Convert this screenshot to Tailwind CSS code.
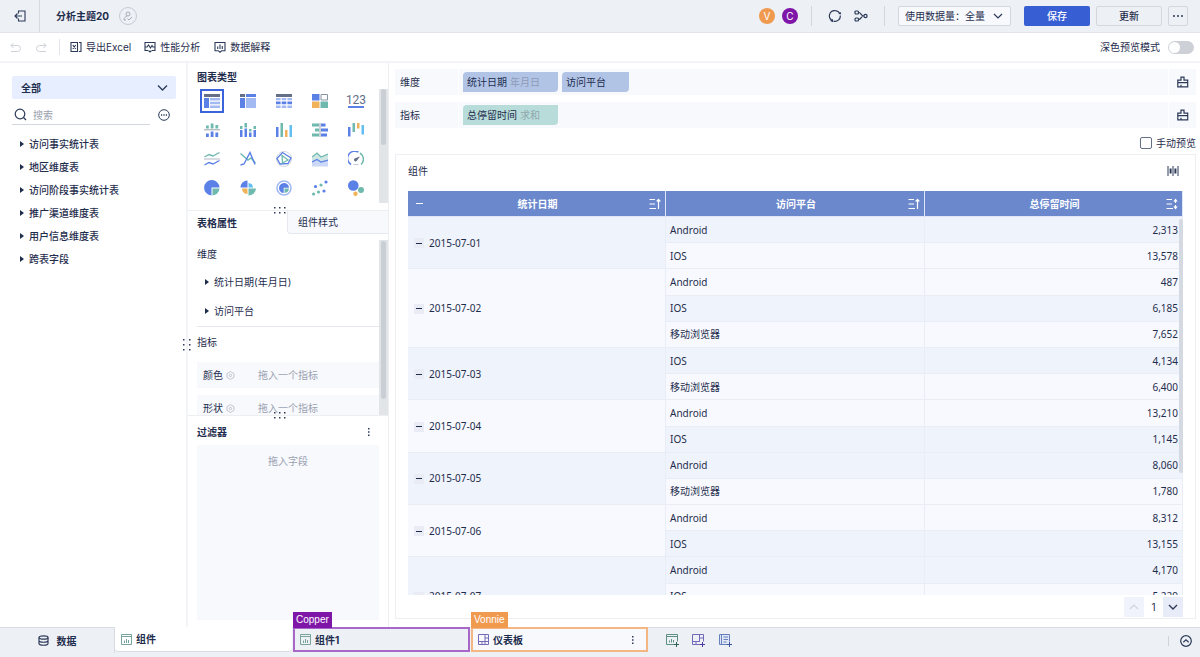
<!DOCTYPE html>
<html lang="zh-CN">
<head>
    <meta charset="UTF-8">
    <meta name="viewport" content="width=device-width, initial-scale=1.0">
    <title>分析主题20</title>
    <script src="https://cdn.jsdelivr.net/npm/@tailwindcss/browser@4"></script>
</head>
<body class="flex flex-col h-screen overflow-hidden bg-white text-[10px] leading-4 text-[#1f2d4d] font-['Inter','Noto_Sans_CJK_SC',sans-serif]">

    <!-- Header -->
    <header class="flex items-center h-[33px] shrink-0 bg-[#edf0f5] border-b border-[#e1e4e9]">
        <button aria-label="退出" class="flex items-center justify-center w-10 h-full border-r border-[#d5d9e0]">
            <svg class="size-3" viewBox="0 0 12 12" fill="none" stroke="#2c3a58" stroke-width="1.1"><path d="M4.500 3.500V1H11V11H4.500V8.500M8 6H1M3.500 3.500L1 6L3.500 8.500"/></svg>
        </button>
        <h1 class="ml-4 font-bold">分析主题20</h1>
        <button aria-label="编辑者" class="flex items-center justify-center ml-[10px] size-[18px] rounded-full border border-[#c6cad3]">
            <svg class="size-[10px]" viewBox="0 0 10 10" fill="none" stroke="#a5abb9"><circle cx="5" cy="3" r="2"/><path d="M4 5C2 6 1 7 1 9H3M4.500 7.500L6 9L9 6"/></svg>
        </button>
        <div class="flex items-center ml-auto pr-3">
            <span class="flex items-center justify-center size-4 rounded-full bg-[#f09a4f] text-white">V</span>
            <span class="flex items-center justify-center ml-[7px] size-4 rounded-full bg-[#7e17a8] text-white">C</span>
            <span class="ml-[13px] w-px h-5 bg-[#d3d7de]"></span>
            <button aria-label="刷新" class="ml-4"><svg class="size-[14px]" viewBox="0 0 14 14" fill="none" stroke="#2c3a58" stroke-width="1.200"><path d="M4 11.500A5.300 5.300 0 0 1 7.500 1.700A5.300 5.300 0 0 1 11.800 4.500M12.300 6.500A5.300 5.300 0 0 1 5.500 12.100"/><path fill="#2c3a58" stroke="none" d="M2 11.800L5 10V13.200ZM13.300 5.300L10.300 5L12.300 2.800Z"/></svg></button>
            <button aria-label="血缘" class="ml-3"><svg class="size-[14px]" viewBox="0 0 14 14" fill="none" stroke="#2c3a58" stroke-width="1.200"><rect x="1" y="2" width="3.500" height="3" rx="1"/><rect x="1" y="9" width="3.500" height="3" rx="1"/><circle cx="11.500" cy="7" r="1.600"/><path d="M4.500 3.500C7.500 3.500 6.500 7 9.800 7M4.500 10.500C7.500 10.500 6.500 7 9.800 7"/></svg></button>
            <span class="ml-4 w-px h-5 bg-[#d3d7de]"></span>
            <div class="relative ml-[13px]">
                <select aria-label="使用数据量" class="appearance-none block w-[113px] h-5 pl-[6px] border border-[#d3d7de] rounded-xs bg-[#f7f9fd]"><option>使用数据量：全量</option></select>
                <svg class="absolute right-2 top-[5px] size-[10px] pointer-events-none" viewBox="0 0 10 10" fill="none" stroke="#2c3a58" stroke-width="1.200"><path d="M1 3L5 7L9 3"/></svg>
            </div>
            <button class="ml-[13px] w-[66px] h-5 rounded-xs bg-[#385ed4] text-white font-medium">保存</button>
            <button class="ml-[6px] w-[66px] h-5 rounded-xs border border-[#d3d7de] font-medium">更新</button>
            <button aria-label="更多" class="flex items-center justify-center ml-[6px] size-5 rounded-xs border border-[#d3d7de]">
                <svg class="w-[10px] h-[2px]" viewBox="0 0 10 2" fill="#2c3a58"><circle cx="1" cy="1" r="1"/><circle cx="5" cy="1" r="1"/><circle cx="9" cy="1" r="1"/></svg>
            </button>
        </div>
    </header>

    <!-- Toolbar -->
    <div class="flex items-center h-[30px] shrink-0 px-[10px] pr-[6px] border-b-2 border-[#f3f4f7]">
        <button aria-label="撤销"><svg class="size-[11px]" viewBox="0 0 11 11" fill="none" stroke="#cdd1d8"><path d="M3.500 1L1 3.500L3.500 6M1 3.500H7.500A2.800 2.800 0 0 1 7.500 9.500H1"/></svg></button>
        <button aria-label="重做" class="ml-[15px]"><svg class="size-[11px]" viewBox="0 0 11 11" fill="none" stroke="#cdd1d8"><path d="M7.500 1L10 3.500L7.500 6M10 3.500H3.500A2.800 2.800 0 0 0 3.500 9.500H10"/></svg></button>
        <span class="ml-3 w-px h-4 bg-[#e1e4e9]"></span>
        <button class="flex items-center gap-1 ml-[10px]">
            <svg class="size-3" viewBox="0 0 12 12" fill="none" stroke="#2c3a58" stroke-width="1.100"><path d="M7.500 1.500H1V10.500H7.500ZM9 1.500H11V10.500H9M2.800 4L5.700 8M5.700 4L2.800 8"/></svg>导出Excel
        </button>
        <button class="flex items-center gap-1 ml-[13px]">
            <svg class="size-3" viewBox="0 0 12 12" fill="none" stroke="#2c3a58" stroke-width="1.100"><path d="M4 9.500H1V1.500H11V9.500H8M1 6H3L4.500 4L6.500 7L8 4.500L9 6H11M4.500 9.500L6 11L7.500 9.500"/></svg>性能分析
        </button>
        <button class="flex items-center gap-1 ml-[14px]">
            <svg class="size-3" viewBox="0 0 12 12" fill="none" stroke="#2c3a58" stroke-width="1.100"><path d="M4.500 9.800H1V1.500H11V9.800H7.500L6 11.300L4.500 9.800M3.700 5.500V8M6 3.500V8M8.300 5V8"/></svg>数据解释
        </button>
        <label class="flex items-center gap-2 ml-auto">深色预览模式
            <input type="checkbox" class="appearance-none w-[26px] h-[13px] rounded-full bg-[#cdd0d6] before:block before:size-[11px] before:m-px before:rounded-full before:bg-white">
        </label>
    </div>

    <main class="flex flex-1 min-h-0">
        <!-- Tables -->
        <aside class="w-[188px] shrink-0 px-3 pt-[13px] pr-[10px] border-r-2 border-[#f3f4f7]">
            <div class="relative">
                <select aria-label="数据分组" class="appearance-none block w-full h-[23px] pl-[9px] rounded-xs bg-[#e6eeff] font-bold"><option>全部</option></select>
                <svg class="absolute right-2 top-[6px] size-[11px] pointer-events-none" viewBox="0 0 11 11" fill="none" stroke="#2c3a58" stroke-width="1.300"><path d="M1 3.500L5.500 8L10 3.500"/></svg>
            </div>
            <div class="flex items-center mt-[6px]">
                <label class="flex items-center flex-1 h-5 gap-[6px] pl-[2px] border-b border-[#d3d7de]">
                    <svg class="size-[13px]" viewBox="0 0 13 13" fill="none" stroke="#2c3a58" stroke-width="1.200"><circle cx="6" cy="6" r="4.800"/><path d="M9.500 9.500L12 12"/></svg>
                    <input type="text" aria-label="搜索" placeholder="搜索" class="w-24 outline-none placeholder:text-[#9aa1b0]">
                </label>
                <button aria-label="更多" class="ml-2 mr-[6px]"><svg class="size-3" viewBox="0 0 12 12" fill="none" stroke="#2c3a58"><circle cx="6" cy="6" r="5.300"/><path d="M3 6H4.200M5.400 6H6.600M7.800 6H9" stroke-width="1.300"/></svg></button>
            </div>
            <ul class="mt-[7px] pl-2 font-medium [&>li]:flex [&>li]:items-center [&>li]:h-[23px] [&>li]:gap-[5px] [&>li]:before:w-1 [&>li]:before:border-y-[3px] [&>li]:before:border-l-4 [&>li]:before:border-y-transparent [&>li]:before:border-l-[#1f2d4d]">
                <li>访问事实统计表</li>
                <li>地区维度表</li>
                <li>访问阶段事实统计表</li>
                <li>推广渠道维度表</li>
                <li>用户信息维度表</li>
                <li>跨表字段</li>
            </ul>
        </aside>

        <!-- Chart settings -->
        <aside class="relative flex flex-col w-[201px] shrink-0 border-r border-[#eceef2]">
            <svg class="absolute -left-[5px] top-[276px] w-2 h-3 z-10" viewBox="0 0 8 12" fill="#2c3a58"><path d="M0 0h1.500v1.500H0zM6 0h1.500v1.500H6zM0 5h1.500v1.500H0zM6 5h1.500v1.500H6zM0 10h1.500v1.500H0zM6 10h1.500v1.500H6z"/></svg>

            <section class="relative h-[148px] shrink-0 pl-[9px] pt-[6px] border-b border-[#eceef2]">
                <h2 class="font-bold">图表类型</h2>
                <div class="grid grid-cols-5 w-[180px] mt-px -ml-[3px] [&>button]:flex [&>button]:items-center [&>button]:justify-center [&>button]:h-[29px] [&_svg]:size-4">
                    <button aria-label="分组表"><span class="flex items-center justify-center size-6 border-2 border-[#3a63dc]"><svg viewBox="0 0 16 16"><path fill="#657088" d="M0 1h16v3H0z"/><path fill="#5b80e6" d="M0 5h5v10H0z"/><path fill="#a3b9f2" d="M6 5h10v2.500H6zM6 8.800h10v2.500H6zM6 12.500h10V15H6z"/></svg></span></button>
                    <button aria-label="交叉表"><svg viewBox="0 0 16 16"><path fill="#657088" d="M0 1h5v3H0z"/><path fill="#5b80e6" d="M6 1h10v3H6zM0 5h5v10H0z"/><path fill="#a3b9f2" d="M6 5h10v10H6z"/></svg></button>
                    <button aria-label="明细表"><svg viewBox="0 0 16 16"><path fill="#657088" d="M0 1h16v3H0z"/><path fill="#a3b9f2" d="M0 5h4.600v2.300H0zM5.700 5h4.600v2.300H5.700zM11.400 5H16v2.300h-4.600zM0 12.500h4.600V15H0zM5.700 12.500h4.600V15H5.700zM11.400 12.500H16V15h-4.600z"/><path fill="#5b80e6" d="M0 8.600h4.600v2.600H0zM5.700 8.600h4.600v2.600H5.700zM11.400 8.600H16v2.600h-4.600z"/></svg></button>
                    <button aria-label="颜色表"><svg viewBox="0 0 16 16"><path fill="#5b80e6" d="M0 1h7.500v6.500H0z"/><path fill="none" stroke="#8a92a3" d="M9 1.500h6.500V7H9z"/><path fill="#f0b35a" d="M0 8.500h7.500V15H0z"/><path fill="#6fb9ae" d="M8.500 8.500H16V15H8.500z"/></svg></button>
                    <button aria-label="指标卡" class="flex-col"><span class="h-3 text-xs leading-3 text-[#657088] font-['Roboto',sans-serif]">123</span><span class="w-4 h-[2px] bg-[#5b80e6]"></span></button>

                    <button aria-label="对比柱状图"><svg viewBox="0 0 16 16"><path fill="#6fb9ae" d="M2 3.500h2.800V6.500H2zM6.700 1.500h2.800v5H6.700zM11.400 3h2.800v3.500h-2.800z"/><path fill="#9aa1b0" d="M0 7.300h16v1H0z"/><path fill="#5b80e6" d="M2 11.500h2.800V15H2zM6.700 9.500h2.800V15H6.700zM11.400 10.500h2.800V15h-2.800z"/></svg></button>
                    <button aria-label="堆积柱状图"><svg viewBox="0 0 16 16"><path fill="#6fb9ae" d="M0 4h2.500v3H0zM4.500 1H7v4.500H4.500zM9 7h2.500v2.500H9zM13.500 4H16v3h-2.500z"/><path fill="#5b80e6" d="M0 8h2.500v7H0zM4.500 6.500H7V15H4.500zM9 10.500h2.500V15H9zM13.500 8H16v7h-2.500z"/></svg></button>
                    <button aria-label="柱形图"><svg viewBox="0 0 16 16"><path fill="#5b80e6" d="M0 5h2.500v10H0z"/><path fill="#6fb9ae" d="M4.500 1H7v14H4.500z"/><path fill="#f0b35a" d="M9 8h2.500v7H9z"/><path fill="#62bdf2" d="M13.500 3H16v12h-2.500z"/></svg></button>
                    <button aria-label="条形图"><svg viewBox="0 0 16 16"><path fill="#6fb9ae" d="M0 1.500h7V4.500H0zM3 6.500h4v3H3zM0 11.500h7v3H0z"/><path fill="#9aa1b0" d="M7.500 1h1v14h-1z"/><path fill="#5b80e6" d="M9 1.500h4.500v3H9zM9 6.500h7v3H9zM9 11.500h6v3H9z"/></svg></button>
                    <button aria-label="瀑布图"><svg viewBox="0 0 16 16"><path fill="#5b80e6" d="M0 5h2.500v9.500H0z"/><path fill="#6fb9ae" d="M4.500 1H7v9H4.500z"/><path fill="#f0b35a" d="M9 1h2.500v5.500H9z"/><path fill="#62bdf2" d="M13.500 3H16v9.500h-2.500z"/></svg></button>

                    <button aria-label="折线图"><svg viewBox="0 0 16 16" fill="none" stroke-width="1.400"><path stroke="#6fb9ae" d="M.5 6L5 3.500L9 5L15.500 1.500"/><path stroke="#b3b8c4" stroke-width="1" d="M0 8h16"/><path stroke="#5b80e6" d="M.5 14L5 11.500L9 13L15.500 9.500"/></svg></button>
                    <button aria-label="范围面积图"><svg viewBox="0 0 16 16" fill="none" stroke-width="1.400"><path stroke="#6fb9ae" d="M.5 2.500L8 9L11 7L15.500 12"/><path stroke="#5b80e6" d="M.5 14L4 13L10 1.500L15 13.500"/></svg></button>
                    <button aria-label="雷达图"><svg viewBox="0 0 16 16" fill="none"><circle cx="8" cy="8" r="7.500" stroke="#d3d7de"/><path stroke="#5b80e6" stroke-width="1.300" d="M1 7.500L6.500 1.500L15 7L12 12.500L4 13Z"/><path stroke="#6fb9ae" stroke-width="1.300" d="M6 4.500L12 9L6.500 12Z"/></svg></button>
                    <button aria-label="面积图"><svg viewBox="0 0 16 16"><path fill="#cfe6e3" d="M0 6L5 2L9 6L16 3V12H0Z"/><path fill="#cbd8f8" d="M0 11L5 8.500L9 11L16 9V15.500H0Z"/><path fill="none" stroke="#6fb9ae" stroke-width="1.300" d="M0 6L5 2L9 6L16 3"/><path fill="none" stroke="#5b80e6" stroke-width="1.300" d="M0 11L5 8.500L9 11L16 9"/></svg></button>
                    <button aria-label="仪表盘"><svg viewBox="0 0 16 16" fill="none" stroke-width="1.500"><path stroke="#5b80e6" d="M3 13.500A7.200 7.200 0 0 1 10.500 1.200"/><path stroke="#6fb9ae" d="M12 2A7.200 7.200 0 0 1 13 13.500"/><path stroke="#c3c8d2" stroke-width="1" d="M5.500 13.500h5"/><path fill="#657088" d="M12 5.500L9 9.500A1.600 1.600 0 1 1 7 7.300Z"/></svg></button>

                    <button aria-label="饼图"><svg viewBox="0 0 16 16"><path fill="#5b80e6" d="M7.500 15.500A7.700 7.700 0 1 1 15.500 7.500H7.500Z"/><path fill="#6fb9ae" d="M8.500 8.500H15.500A7.500 7.500 0 0 1 8.500 15.500Z"/></svg></button>
                    <button aria-label="玫瑰图"><svg viewBox="0 0 16 16"><path fill="#5b80e6" d="M7.500 .5V7.500H.5A7 7 0 0 1 7.500 .5Z"/><path fill="#62bdf2" d="M8.500 3A4.800 4.800 0 0 1 13 7.500H8.500Z"/><path fill="#f0b35a" d="M2 8.500H7.500V14A5.500 5.500 0 0 1 2 8.500Z"/><path fill="#6fb9ae" d="M8.500 8.500H16A7.500 7.500 0 0 1 8.500 15.500Z"/></svg></button>
                    <button aria-label="多层饼图"><svg viewBox="0 0 16 16"><circle cx="8" cy="8" r="7" fill="none" stroke="#a3b9f2" stroke-width="1.600"/><path fill="#5b80e6" d="M7.700 13A5 5 0 1 1 13 7.700H7.700Z"/><path fill="#6fb9ae" d="M8.500 8.500H13A5 5 0 0 1 8.500 13Z"/></svg></button>
                    <button aria-label="散点图"><svg viewBox="0 0 16 16"><g fill="#5b80e6"><circle cx="3.500" cy="6.500" r="1.600"/><circle cx="14" cy="2" r="1.600"/><circle cx="12" cy="11" r="1.600"/></g><g fill="#6fb9ae"><circle cx="1.600" cy="14" r="1.600"/><circle cx="6.500" cy="12" r="1.600"/><circle cx="9" cy="5" r="1.600"/></g></svg></button>
                    <button aria-label="气泡图"><svg viewBox="0 0 16 16"><circle cx="5.300" cy="5.500" r="5.300" fill="#5b80e6"/><circle cx="13" cy="10" r="3" fill="#6fb9ae"/><circle cx="7.500" cy="13.800" r="2.200" fill="#f0b35a"/></svg></button>
                </div>
                <div class="absolute right-0 top-[26px] w-[9px] h-[114px] px-[2px] bg-[#e2e5e8]"><div class="h-14 rounded-full bg-[#cacfd5]"></div></div>
            </section>

            <section class="relative flex flex-col h-[205px] shrink-0 border-b border-[#eceef2]">
                <svg class="absolute left-[86px] -top-[4px] w-3 h-2 z-10" viewBox="0 0 12 8" fill="#2c3a58"><path d="M0 0h1.500v1.500H0zM5 0h1.500v1.500H5zM10 0h1.500v1.500H10zM0 5h1.500v1.500H0zM5 5h1.500v1.500H5zM10 5h1.500v1.500H10z"/></svg>
                <div class="flex h-[23px] shrink-0">
                    <button class="w-[99px] pl-[9px] text-left font-bold">表格属性</button>
                    <button class="flex-1 pl-[10px] text-left bg-[#f7f9fd] border-l border-b border-[#e5e8ed] rounded-bl-sm">组件样式</button>
                </div>
                <div class="relative flex-1 min-h-0 mt-[6px] pl-[9px] pr-[9px] overflow-hidden">
                    <h3 class="mt-[6px]">维度</h3>
                    <ul class="mt-[5px] pb-px pl-2 border-b border-[#e5e8ed] [&>li]:flex [&>li]:items-center [&>li]:h-[29px] [&>li]:gap-[5px] [&>li]:before:w-1 [&>li]:before:border-y-[3px] [&>li]:before:border-l-4 [&>li]:before:border-y-transparent [&>li]:before:border-l-[#1f2d4d]">
                        <li>统计日期(年月日)</li>
                        <li>访问平台</li>
                    </ul>
                    <h3 class="mt-[7px]">指标</h3>
                    <div class="flex items-center h-[26px] mt-3 pl-[6px] bg-[#f7f9fd]">
                        <span>颜色</span>
                        <svg class="ml-[3px] size-[9px]" viewBox="0 0 9 9" fill="none" stroke="#c0c5cf"><path d="M4.500 .6L8 2.600V6.400L4.500 8.400L1 6.400V2.600Z"/><circle cx="4.500" cy="4.500" r="1.200"/></svg>
                        <span class="ml-[23px] text-[#9aa1b0]">拖入一个指标</span>
                    </div>
                    <div class="flex items-center h-[26px] mt-[7px] pl-[6px] bg-[#f7f9fd]">
                        <span>形状</span>
                        <svg class="ml-[3px] size-[9px]" viewBox="0 0 9 9" fill="none" stroke="#c0c5cf"><path d="M4.500 .6L8 2.600V6.400L4.500 8.400L1 6.400V2.600Z"/><circle cx="4.500" cy="4.500" r="1.200"/></svg>
                        <span class="ml-[23px] text-[#9aa1b0]">拖入一个指标</span>
                    </div>
                    <div class="absolute right-0 top-0 w-[9px] h-full px-[2px] pt-px bg-[#e2e5e8]"><div class="h-[158px] rounded-full bg-[#cacfd5]"></div></div>
                </div>
            </section>

            <section class="relative flex flex-col flex-1 min-h-0 px-[9px] pb-[7px]">
                <svg class="absolute left-[86px] -top-[4px] w-3 h-2 z-10" viewBox="0 0 12 8" fill="#2c3a58"><path d="M0 0h1.500v1.500H0zM5 0h1.500v1.500H5zM10 0h1.500v1.500H10zM0 5h1.500v1.500H0zM5 5h1.500v1.500H5zM10 5h1.500v1.500H10z"/></svg>
                <div class="flex items-center justify-between h-[29px] pt-[3px] pr-[9px]">
                    <h2 class="font-bold">过滤器</h2>
                    <button aria-label="过滤器菜单"><svg class="w-[2px] h-2" viewBox="0 0 2 8" fill="#2c3a58"><path d="M0 0h1.500v1.500H0zM0 3.200h1.500v1.500H0zM0 6.400h1.500v1.500H0z"/></svg></button>
                </div>
                <div class="flex-1 pt-2 bg-[#f7f9fd] text-center text-[#9aa1b0]">拖入字段</div>
            </section>
        </aside>

        <!-- Canvas -->
        <div class="flex flex-col flex-1 min-w-0 pl-[6px] pr-1 pt-[6px] pb-2">
            <div class="flex h-[26px] shrink-0 gap-px">
                <div class="flex items-center w-[63px] pl-[5px] bg-[#f7f9fd]">维度</div>
                <div class="flex items-center flex-1 gap-1 pl-1 bg-[#f7f9fd]">
                    <div class="flex items-center w-[95px] h-5 pl-1 gap-[3px] rounded-tl rounded-br bg-[#b1c4e6]">统计日期<span class="text-[#8f9bb5]">年月日</span></div>
                    <div class="flex items-center w-[67px] h-5 pl-1 rounded-tl rounded-br bg-[#b1c4e6]">访问平台</div>
                </div>
                <button aria-label="清空维度" class="flex items-center justify-center w-[27px] bg-[#f7f9fd]"><svg class="size-3" viewBox="0 0 12 12" fill="none" stroke="#2c3a58" stroke-width="1.200"><path d="M.8 4.200H4V1.200H7V4.200H10.700V10.800H.8ZM.8 6.600H10.700M4 10.800V8.800"/></svg></button>
            </div>
            <div class="flex h-[26px] shrink-0 gap-px mt-[7px]">
                <div class="flex items-center w-[63px] pl-[5px] bg-[#f7f9fd]">指标</div>
                <div class="flex items-center flex-1 pl-1 bg-[#f7f9fd]">
                    <div class="flex items-center w-[95px] h-5 pl-1 gap-[3px] rounded-tl rounded-br bg-[#b8dcd9]">总停留时间<span class="text-[#8fa8ad]">求和</span></div>
                </div>
                <button aria-label="清空指标" class="flex items-center justify-center w-[27px] bg-[#f7f9fd]"><svg class="size-3" viewBox="0 0 12 12" fill="none" stroke="#2c3a58" stroke-width="1.200"><path d="M.8 4.200H4V1.200H7V4.200H10.700V10.800H.8ZM.8 6.600H10.700M4 10.800V8.800"/></svg></button>
            </div>
            <label class="flex items-center justify-end h-[26px] shrink-0 gap-1 pt-[3px]">
                <input type="checkbox" class="appearance-none size-3 rounded-xs border border-[#657088] bg-white">手动预览
            </label>

            <section class="flex flex-col flex-1 min-h-0 px-3 border border-[#eceef2]">
                <div class="flex items-center justify-between h-9 shrink-0 pb-1 pr-1">
                    <h2>组件</h2>
                    <button aria-label="列宽"><svg class="size-3" viewBox="0 0 12 12" fill="#2c3a58"><path d="M.5 1h1v10h-1zM2.600 3.500h2v5h-2zM5.500 1h1v10h-1zM7.400 3.500h2v5h-2zM10.500 1h1v10h-1z"/></svg></button>
                </div>
                <div class="relative flex-1 min-h-0 overflow-hidden">
                    <table class="w-full h-[445px] table-fixed border-separate border-spacing-0 font-['Noto_Sans','Noto_Sans_CJK_SC',sans-serif] [&_td]:border-r [&_td]:border-b [&_td]:border-[#e9edf6] [&_td]:px-1 [&_td]:py-0">
                        <colgroup><col class="w-[258px]"><col class="w-[259px]"><col></colgroup>
                        <thead class="text-white">
                            <tr class="h-[26px] bg-[#6b88cd] [&>th]:border-r [&>th]:border-[#dfe6f7] [&>th]:border-b [&>th]:p-0 [&>th]:font-bold">
                                <th><div class="flex items-center px-1"><button aria-label="全部折叠" class="flex items-center justify-center size-[14px]"><span class="w-[7px] h-px bg-white"></span></button><span class="flex-1">统计日期</span><button aria-label="日期排序"><svg class="size-3" viewBox="0 0 12 12" fill="none" stroke="#fff" stroke-width="1.200"><path d="M.5 1.500H6M.5 6H6M.5 10.500H7M9.500 11V1.500M7.700 3.500L9.500 1.500L11.300 3.500"/></svg></button></div></th>
                                <th><div class="flex items-center pl-[18px] pr-1"><span class="flex-1">访问平台</span><button aria-label="平台排序"><svg class="size-3" viewBox="0 0 12 12" fill="none" stroke="#fff" stroke-width="1.200"><path d="M.5 1.500H6M.5 6H6M.5 10.500H7M9.500 11V1.500M7.700 3.500L9.500 1.500L11.300 3.500"/></svg></button></div></th>
                                <th><div class="flex items-center pl-[18px] pr-1"><span class="flex-1">总停留时间</span><button aria-label="时间排序"><svg class="size-3" viewBox="0 0 12 12" fill="none" stroke="#fff" stroke-width="1.200"><path d="M.5 1.500H6M.5 6H6M.5 10.500H7M9.500 5V1.500M9.500 7V10.500"/><path fill="#fff" stroke="none" d="M7.300 3.600L9.500 .6L11.700 3.600ZM7.300 8.400L9.500 11.400L11.700 8.400Z"/></svg></button></div></th>
                            </tr>
                        </thead>
                        <tbody class="[&>tr]:bg-[#f7f9fe] [&_.dark]:bg-[#eff3fb] [&_button]:inline-flex [&_button]:items-center [&_button]:justify-center [&_button]:size-[10px] [&_button]:ml-[2px] [&_button]:mr-[5px] [&_button]:align-[3px] [&_button]:bg-[#e9ecf4] [&_i]:w-[6px] [&_i]:h-px [&_i]:bg-[#1f2d4d]">
                            <tr><td rowspan="2" class="dark"><button aria-label="折叠"><i></i></button>2015-07-01</td><td class="dark">Android</td><td class="dark text-right">2,313</td></tr>
                            <tr><td>IOS</td><td class="text-right">13,578</td></tr>
                            <tr><td rowspan="3"><button aria-label="折叠"><i></i></button>2015-07-02</td><td>Android</td><td class="text-right">487</td></tr>
                            <tr><td class="dark">IOS</td><td class="dark text-right">6,185</td></tr>
                            <tr><td>移动浏览器</td><td class="text-right">7,652</td></tr>
                            <tr><td rowspan="2" class="dark"><button aria-label="折叠"><i></i></button>2015-07-03</td><td class="dark">IOS</td><td class="dark text-right">4,134</td></tr>
                            <tr><td>移动浏览器</td><td class="text-right">6,400</td></tr>
                            <tr><td rowspan="2"><button aria-label="折叠"><i></i></button>2015-07-04</td><td>Android</td><td class="text-right">13,210</td></tr>
                            <tr><td class="dark">IOS</td><td class="dark text-right">1,145</td></tr>
                            <tr><td rowspan="2" class="dark"><button aria-label="折叠"><i></i></button>2015-07-05</td><td class="dark">Android</td><td class="dark text-right">8,060</td></tr>
                            <tr><td>移动浏览器</td><td class="text-right">1,780</td></tr>
                            <tr><td rowspan="2"><button aria-label="折叠"><i></i></button>2015-07-06</td><td>Android</td><td class="text-right">8,312</td></tr>
                            <tr><td class="dark">IOS</td><td class="dark text-right">13,155</td></tr>
                            <tr><td rowspan="3" class="dark"><button aria-label="折叠"><i></i></button>2015-07-07</td><td class="dark">Android</td><td class="dark text-right">4,170</td></tr>
                            <tr><td>IOS</td><td class="text-right">5,229</td></tr>
                            <tr><td class="dark">&nbsp;</td><td class="dark">&nbsp;</td></tr>
                        </tbody>
                    </table>
                    <div class="absolute right-0 top-7 w-1 h-[254px] rounded-full bg-[#d5d9e2]"></div>
                </div>
                <div class="flex items-center justify-end h-[23px] shrink-0">
                    <button aria-label="上一页" class="flex items-center justify-center size-5 bg-[#f0f3fb]"><svg class="size-[10px]" viewBox="0 0 10 10" fill="none" stroke="#d0d4dc" stroke-width="1.200"><path d="M1 7L5 3L9 7"/></svg></button>
                    <span class="w-[19px] text-center">1</span>
                    <button aria-label="下一页" class="flex items-center justify-center size-5 bg-[#e8ecf8]"><svg class="size-[10px]" viewBox="0 0 10 10" fill="none" stroke="#2c3a58" stroke-width="1.400"><path d="M1 3L5 7L9 3"/></svg></button>
                </div>
            </section>
        </div>
    </main>

    <!-- Bottom tabs -->
    <footer class="flex h-[30px] shrink-0 bg-[#edf0f5]">
        <button class="flex items-center justify-center gap-2 w-[115px] h-[26px] border-t border-r border-[#d8dce2] font-bold">
            <svg class="size-[11px]" viewBox="0 0 11 11" fill="none" stroke="#2c3a58" stroke-width="1.200"><ellipse cx="5.500" cy="2.500" rx="4.500" ry="1.700"/><path d="M1 2.500V8.500C1 10.800 10 10.800 10 8.500V2.500M1 5.500C1 7.800 10 7.800 10 5.500"/></svg>数据
        </button>
        <button class="flex items-center gap-1 w-[177px] h-[25px] pl-[6px] rounded-b bg-white border-b border-[#d8dce2] font-bold">
            <svg class="size-[11px]" viewBox="0 0 11 11" fill="none" stroke="#78a49d"><path d="M.5 .5h10v10H.5zM.5 2.500h10M3.500 6.500v2.500M5.500 5v4M7.500 6v3"/></svg>组件
        </button>
        <div class="relative ml-px">
            <span class="absolute left-0 -top-[15px] h-4 px-[3px] bg-[#7e17a8] text-white font-['Liberation_Sans',sans-serif]">Copper</span>
            <button class="flex items-center gap-1 w-[177px] h-[25px] pl-[5px] border-2 border-[#a868c8] font-bold">
                <svg class="size-[11px]" viewBox="0 0 11 11" fill="none" stroke="#78a49d"><path d="M.5 .5h10v10H.5zM.5 2.500h10M3.500 6.500v2.500M5.500 5v4M7.500 6v3"/></svg>组件1
            </button>
        </div>
        <div class="relative ml-px">
            <span class="absolute left-0 -top-[15px] h-4 px-[3px] bg-[#f09a4f] text-white font-['Liberation_Sans',sans-serif]">Vonnie</span>
            <button class="flex items-center gap-1 w-[177px] h-[25px] pl-[5px] pr-3 border-2 border-[#f4b682] bg-[#f7f9fd] font-bold">
                <svg class="size-[11px]" viewBox="0 0 11 11" fill="none" stroke="#7468b8"><path d="M.5 .5h10v10H.5zM7 .5v10M.5 7.500h10M7 4h3.500M4 7.500v3"/></svg>仪表板
                <svg class="ml-auto w-[2px] h-2" viewBox="0 0 2 8" fill="#2c3a58"><path d="M0 0h1.500v1.500H0zM0 3.200h1.500v1.500H0zM0 6.400h1.500v1.500H0z"/></svg>
            </button>
        </div>
        <div class="flex items-center flex-1 h-[26px] pl-[18px] pr-2 border-t border-[#d8dce2]">
            <button aria-label="添加组件"><svg class="size-[13px]" viewBox="0 0 13 13" fill="none" stroke="#5f8f86"><path d="M8 10.500H.5V.5H11.500V7.500M.5 2.500H11.500M3.500 6.500v2M5.500 5v3.500M7.500 6v2.500"/><path stroke="#2f5f58" d="M10.500 8v5M8 10.500h5"/></svg></button>
            <button aria-label="添加仪表板" class="ml-[13px]"><svg class="size-[13px]" viewBox="0 0 13 13" fill="none" stroke="#7468b8"><path d="M8 10.500H.5V.5H11.500V7.500M7.500 .5V8M.5 7.500H8M7.500 4h4M4 7.500v3"/><path stroke="#4a3aa0" d="M10.500 8v5M8 10.500h5"/></svg></button>
            <button aria-label="添加报告" class="ml-[14px]"><svg class="size-[13px]" viewBox="0 0 13 13" fill="none" stroke="#6680bd"><path fill="#dfe7f8" d="M8 10.500H.5V.5H10.500V7.500M2.500 .5v10"/><path d="M4.500 3h4.500M4.500 5.500h4.500M4.500 8h3"/><path stroke="#3a5599" d="M10.500 8v5M8 10.500h5"/></svg></button>
            <span class="ml-auto w-px h-[10px] bg-[#cfd3da]"></span>
            <button aria-label="收起" class="ml-[11px]"><svg class="size-3" viewBox="0 0 12 12" fill="none" stroke="#2c3a58" stroke-width="1.200"><circle cx="6" cy="6" r="5.300"/><path d="M3.300 7.200L6 4.700L8.700 7.200"/></svg></button>
        </div>
    </footer>
</body>
</html>
